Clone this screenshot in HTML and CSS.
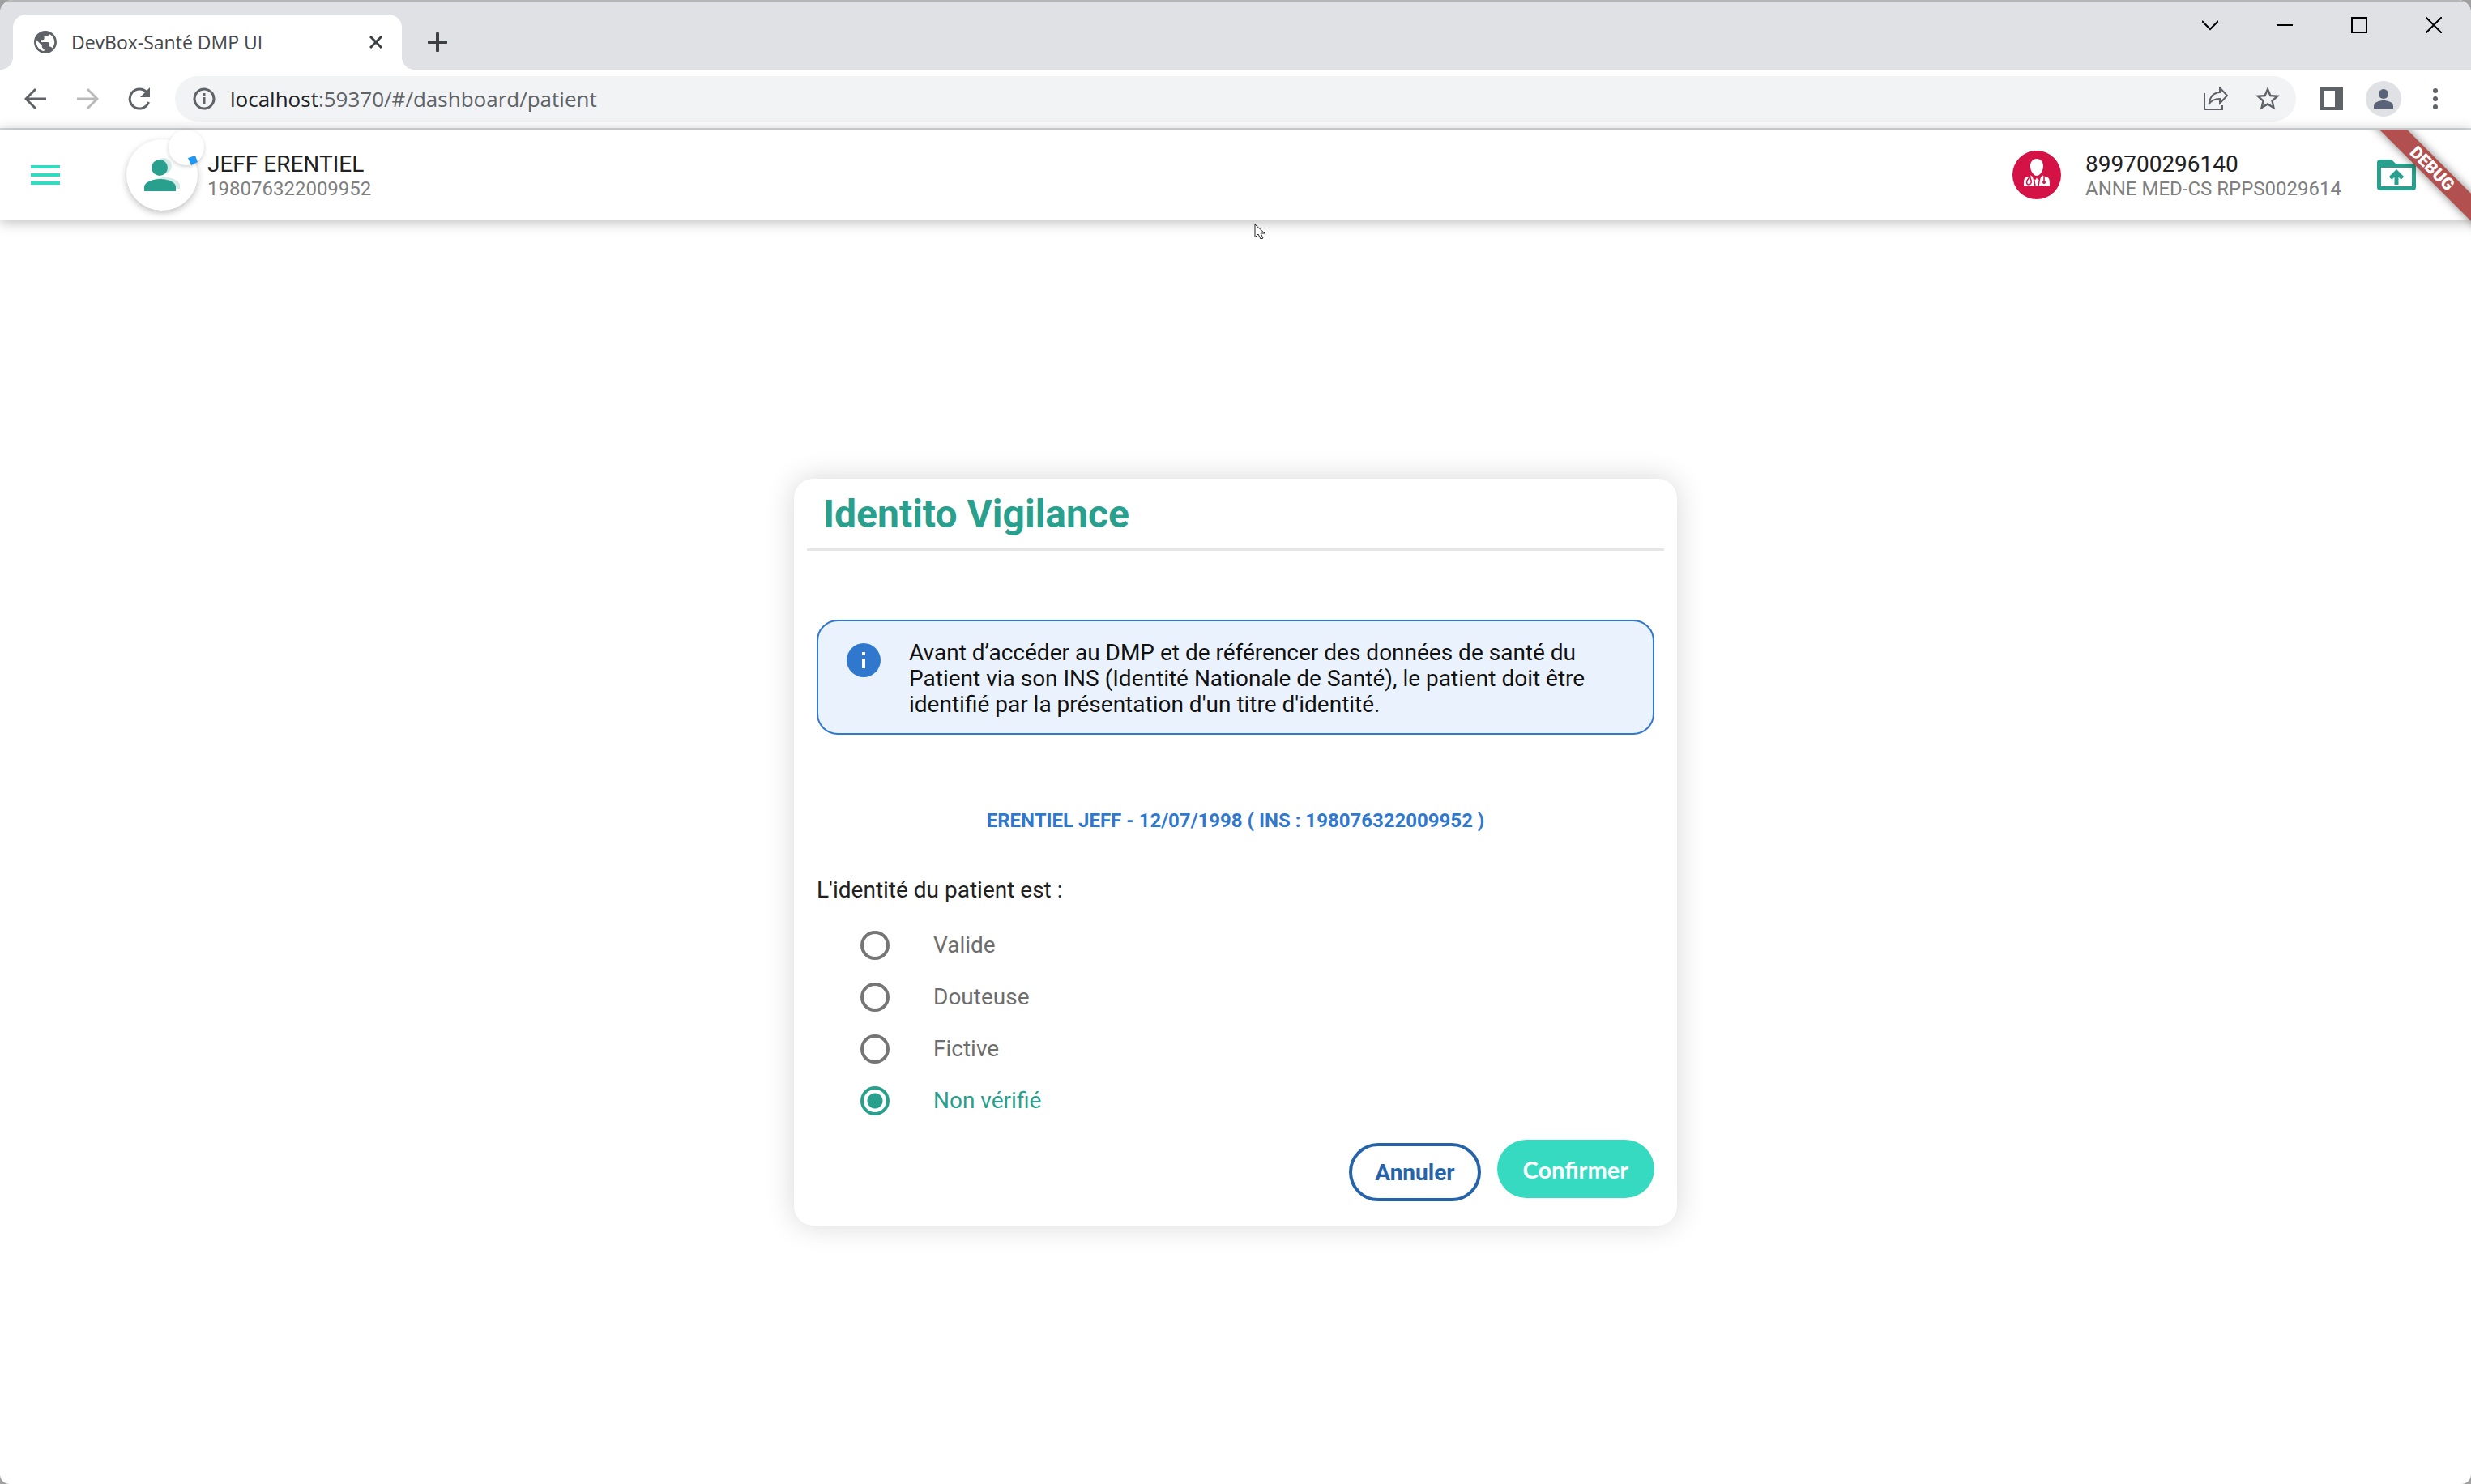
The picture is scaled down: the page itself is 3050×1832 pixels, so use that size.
FILE: index.html
```html
<!DOCTYPE html>
<html lang="fr">
<head>
<meta charset="utf-8">
<meta name="viewport" content="width=device-width, initial-scale=1">
<title>DevBox-Santé DMP UI</title>
<link rel="stylesheet" href="styles.css">
</head>
<body>
<div class="window">
  <div class="tab-strip">
    <div class="tab">
      <svg class="tab-icon" viewBox="2 2 20 20" aria-hidden="true"><path d="M12 2C6.480 2 2 6.480 2 12s4.480 10 10 10 10-4.480 10-10S17.520 2 12 2zm-1 17.930C7.050 19.440 4 16.080 4 12c0-.620.080-1.210.210-1.790L9 15v1c0 1.100.900 2 2 2v1.930zm6.900-2.540c-.260-.810-1-1.390-1.900-1.390h-1v-3c0-.550-.450-1-1-1H8v-2h2c.550 0 1-.450 1-1V7h2c1.100 0 2-.900 2-2v-.410c2.930 1.190 5 4.060 5 7.410 0 2.080-.800 3.970-2.100 5.390z"/></svg>
      <span class="tab-title">DevBox-Santé DMP UI</span>
      <button class="plain tab-close" type="button" aria-label="Fermer l'onglet"><svg width="16" height="16" viewBox="0 0 16 16"><path d="M1 1l14 14M15 1L1 15" fill="none" stroke="#3c4043" stroke-width="3"/></svg></button>
    </div>
    <button class="plain new-tab" type="button" aria-label="Nouvel onglet"><svg width="24" height="24" viewBox="0 0 24 24"><path d="M12 1.500v21M1.500 12h21" fill="none" stroke="#3c4043" stroke-width="4" stroke-linecap="round"/></svg></button>
    <div class="window-controls">
      <button class="plain" type="button" aria-label="Rechercher des onglets"><svg width="20" height="20" viewBox="0 0 20 20"><path d="M0 5l10 10L20 5" fill="none" stroke="#000" stroke-width="2"/></svg></button>
      <button class="plain" type="button" aria-label="Réduire"><svg width="20" height="20" viewBox="0 0 20 20"><path d="M0 10h20" stroke="#000" stroke-width="2"/></svg></button>
      <button class="plain" type="button" aria-label="Agrandir"><svg width="20" height="20" viewBox="0 0 20 20"><path d="M1 1h18v18H1z" fill="none" stroke="#000" stroke-width="2"/></svg></button>
      <button class="plain" type="button" aria-label="Fermer"><svg width="20" height="20" viewBox="0 0 20 20"><path d="M0 0l20 20M20 0L0 20" stroke="#000" stroke-width="2"/></svg></button>
    </div>
  </div>

  <div class="toolbar">
    <div class="nav-buttons">
      <button class="plain" type="button" aria-label="Précédent"><svg width="28" height="28" viewBox="0 0 28 28"><path d="M27 14H3M14 2L2 14l12 12" fill="none" stroke="#5f6368" stroke-width="3"/></svg></button>
      <button class="plain" type="button" aria-label="Suivant"><svg width="28" height="28" viewBox="0 0 28 28"><path d="M1 14h24M14 2l12 12-12 12" fill="none" stroke="#bababc" stroke-width="3"/></svg></button>
      <button class="plain" type="button" aria-label="Actualiser"><svg width="28" height="28" viewBox="0 0 28 28"><path d="M23.500 6.500A12 12 0 1 0 25.500 18" fill="none" stroke="#5f6368" stroke-width="3"/><path d="M27 0v12H15z" fill="#5f6368"/></svg></button>
    </div>
    <div class="omnibox">
      <svg width="28" height="28" viewBox="0 0 28 28" aria-hidden="true"><circle cx="14" cy="14" r="12" fill="none" stroke="#5f6368" stroke-width="3"/><path d="M14 12v8M14 7v3" stroke="#5f6368" stroke-width="3"/></svg>
      <div class="url"><span class="url-host">localhost</span>:59370/#/dashboard/patient</div>
      <button class="plain" type="button" aria-label="Partager"><svg width="30" height="30" viewBox="0 0 30 30"><path d="M1 8v20h22v-5" fill="none" stroke="#5f6368" stroke-width="2"/><path d="M20 1.500l9 9.500-9 9.500v-5.500c-7 0-11 2-13.500 7C7.500 13 12 7.500 20 7z" fill="none" stroke="#5f6368" stroke-width="2"/></svg></button>
      <button class="plain" type="button" aria-label="Ajouter aux favoris"><svg width="30" height="30" viewBox="2 2 20 20"><path fill="#5f6368" d="M22 9.240l-7.190-.620L12 2 9.190 8.630 2 9.240l5.460 4.730L5.820 21 12 17.270 18.180 21l-1.630-7.030L22 9.240zM12 15.400l-3.760 2.270 1-4.280-3.320-2.880 4.380-.380L12 6.100l1.710 4.040 4.380.380-3.320 2.880 1 4.280L12 15.400z"/></svg></button>
    </div>
    <div class="toolbar-end">
      <button class="plain" type="button" aria-label="Panneau latéral"><svg width="28" height="28" viewBox="0 0 28 28"><path fill="#5f6368" fill-rule="evenodd" d="M0 0h28v28H0zM4 4v20h14V4z"/></svg></button>
      <button class="plain profile" type="button" aria-label="Profil"><svg width="24" height="24" viewBox="0 0 24 24"><g fill="#5a6478"><circle cx="12" cy="6" r="6"/><path d="M0 24v-3c0-5 7-7 12-7s12 2 12 7v3z"/></g></svg></button>
      <button class="plain" type="button" aria-label="Menu du navigateur"><svg width="8" height="28" viewBox="0 0 8 28"><g fill="#5f6368"><circle cx="4" cy="4" r="3"/><circle cx="4" cy="14" r="3"/><circle cx="4" cy="24" r="3"/></g></svg></button>
    </div>
  </div>

  <div class="app">
    <header class="app-bar">
      <button class="plain menu" type="button" aria-label="Menu"><svg width="36" height="24" viewBox="0 0 36 24"><path fill="#35dac1" d="M0 0h36v4H0zM0 10h36v4H0zM0 20h36v4H0z"/></svg></button>
      <div class="avatar">
        <svg width="48" height="42" viewBox="-2 0 48 42" aria-hidden="true"><g fill="#d6ebe7"><circle cx="24" cy="10" r="10"/><path d="M5 38v-4c0-7 13-10 20-10s19 3 19 10v4z"/></g><g fill="#29a08d"><circle cx="19" cy="12" r="10"/><path d="M0 41v-5c0-7 13-10 20-10s19 3 19 10v5z"/></g></svg>
        <span class="avatar-badge"><svg width="12" height="12" viewBox="0 0 12 12" aria-hidden="true"><path d="M0 3l9-3 3 8-8 4z" fill="#2196f3"/></svg></span>
      </div>
      <div class="identity patient">
        <div class="identity-name">JEFF ERENTIEL</div>
        <div class="identity-detail">198076322009952</div>
      </div>
      <svg class="doctor" width="60" height="60" viewBox="0 0 60 60" aria-hidden="true"><circle cx="30" cy="30" r="30" fill="#d41245"/><path fill="#fff" d="M30 10c5 0 8 4 8 9 0 6-4 12-8 12s-8-6-8-12c0-5 3-9 8-9zM14 43.500c0-7 0-10 4-11l5-2 5 6 2-3 2 3 5-6 5 2c4 1 4 4 4 11z"/><path fill="none" stroke="#d41245" stroke-width="1.500" d="M21 31c0 3-2 4-3 6-1 3 0 5 2 5s4-2 3-5c0-2-2-3-1-6M39 31v6M26 33l2 10M34 33l-2 10"/><circle cx="39" cy="39" r="2" fill="#d41245"/></svg>
      <div class="identity practitioner">
        <div class="identity-name">899700296140</div>
        <div class="identity-detail">ANNE MED-CS RPPS0029614</div>
      </div>
      <button class="plain upload" type="button" aria-label="Envoyer un document"><svg width="48" height="38" viewBox="0 0 48 38"><path fill="#29a08d" fill-rule="evenodd" d="M4 0h14l5 5h21a4 4 0 0 1 4 4v25a4 4 0 0 1-4 4H4a4 4 0 0 1-4-4V4a4 4 0 0 1 4-4zM5 10v23h38V10z"/><path d="M24 31V15M16.500 23l7.500-7.500 7.500 7.500" fill="none" stroke="#29a08d" stroke-width="5"/></svg></button>
    </header>
    <div class="debug-corner"><div class="debug-ribbon">DEBUG</div></div>

    <main class="content">
      <form class="card">
        <h1 class="card-title">Identito Vigilance</h1>
        <div class="card-body">
          <div class="notice">
            <svg width="42" height="42" viewBox="0 0 42 42" aria-hidden="true"><circle cx="21" cy="21" r="21" fill="#3078cd"/><path d="M21 19v12M21 11v4" stroke="#fff" stroke-width="4"/></svg>
            <p class="notice-text">Avant d’accéder au DMP et de référencer des données de santé du Patient via son INS (Identité Nationale de Santé), le patient doit être identifié par la présentation d'un titre d'identité.</p>
          </div>
          <p class="patient-line">ERENTIEL JEFF - 12/07/1998 ( INS : 198076322009952 )</p>
          <fieldset class="choices">
            <legend>L'identité du patient est :</legend>
            <label class="choice"><input type="radio" name="identite">Valide</label>
            <label class="choice"><input type="radio" name="identite">Douteuse</label>
            <label class="choice"><input type="radio" name="identite">Fictive</label>
            <label class="choice"><input type="radio" name="identite" checked>Non vérifié</label>
          </fieldset>
          <div class="actions">
            <button class="btn btn-outline" type="button">Annuler</button>
            <button class="btn btn-primary" type="submit">Confirmer</button>
          </div>
        </div>
      </form>
    </main>
  </div>
  <svg class="cursor" width="14" height="20" viewBox="0 0 14 20" aria-hidden="true"><path d="M1 1v16l4-4 3 6 3-1-3-6h5z" fill="#fff" stroke="#222" stroke-width="1"/></svg>
</div>
</body>
</html>
```
FILE: styles.css
```css
* { box-sizing: border-box; }

body {
  margin: 0;
  background: #a0a0a0;
  font-family: Roboto, "Liberation Sans", sans-serif;
  color: #212121;
}

svg { display: block; flex: none; }

.plain {
  display: flex;
  align-items: center;
  justify-content: center;
  padding: 0;
  border: 0;
  background: none;
}

.window {
  position: relative;
  display: flex;
  flex-direction: column;
  min-height: 100vh;
  overflow: hidden;
  border-radius: 16px 16px 12px 12px;
  background: #fff;
}

/* Tab strip */
.tab-strip {
  display: flex;
  height: 86px;
  padding: 16px 36px 0 16px;
  border-top: 2px solid #b7b8b6;
  background: #dfe1e5;
}

.tab {
  position: relative;
  display: flex;
  align-items: center;
  gap: 18px;
  width: 480px;
  padding: 0 24px 0 26px;
  border-radius: 16px 16px 0 0;
  background: #fff;
}

.tab::before,
.tab::after {
  content: "";
  position: absolute;
  bottom: 0;
  width: 16px;
  height: 16px;
}

.tab::before {
  right: 100%;
  background: radial-gradient(circle at 0 0, transparent 16px, #fff 16px);
}

.tab::after {
  left: 100%;
  background: radial-gradient(circle at 100% 0, transparent 16px, #fff 16px);
}

.tab-icon { width: 28px; height: 28px; fill: #5f6368; }

.tab-title {
  flex: 1;
  font: 23px/32px "Open Sans", "Noto Sans", sans-serif;
  color: #45474a;
}

.new-tab { width: 24px; margin-left: 32px; }

.window-controls {
  display: flex;
  align-items: center;
  gap: 72px;
  height: 26px;
  margin-left: auto;
}

/* Toolbar */
.toolbar {
  display: flex;
  align-items: center;
  gap: 30px;
  height: 74px;
  padding: 0 40px 0 30px;
  border-bottom: 2px solid #dadce0;
}

.nav-buttons { display: flex; gap: 36px; }

.omnibox {
  display: flex;
  flex: 1;
  align-items: center;
  gap: 34px;
  height: 56px;
  padding: 0 20px 0 22px;
  border-radius: 28px;
  background: #f1f3f4;
}

.url {
  flex: 1;
  margin-left: -16px;
  font: 26px/32px "Open Sans", "Noto Sans", sans-serif;
  color: #5f6368;
}

.url-host { color: #202124; }

.toolbar-end { display: flex; align-items: center; gap: 28px; }
.toolbar-end .profile + .plain { margin-left: 10px; }

.profile {
  width: 44px;
  height: 44px;
  border-radius: 50%;
  background: #dfe1e5;
}

/* Application */
.app {
  position: relative;
  display: flex;
  flex: 1;
  flex-direction: column;
}

.app-bar {
  display: flex;
  align-items: center;
  height: 112px;
  padding: 0 68px 0 38px;
  background: #fff;
  box-shadow: 0 2px 16px rgba(0, 0, 0, .28);
}

.avatar {
  position: relative;
  display: flex;
  align-items: center;
  justify-content: center;
  width: 88px;
  height: 88px;
  margin-left: 82px;
  border-radius: 50%;
  background: #fff;
  box-shadow: 0 3px 8px rgba(0, 0, 0, .25);
}

.avatar-badge {
  position: absolute;
  top: -12px;
  right: -8px;
  display: flex;
  align-items: flex-end;
  justify-content: flex-end;
  width: 44px;
  height: 44px;
  padding-right: 8px;
  border-radius: 50%;
  background: #fff;
  box-shadow: 0 2px 5px rgba(0, 0, 0, .18);
}

.identity { padding-top: 2px; }
.patient { margin-left: 12px; }
.identity-name { font-size: 28px; line-height: 32px; }
.identity-detail { font-size: 24px; line-height: 28px; color: #808080; }

.doctor { margin-left: auto; }
.practitioner { margin-left: 30px; }
.upload { margin-left: 44px; }

.debug-corner {
  position: absolute;
  top: 0;
  right: 0;
  width: 160px;
  height: 160px;
  overflow: hidden;
}

.debug-ribbon {
  position: absolute;
  top: 36px;
  right: -72px;
  width: 240px;
  background: #b25050;
  box-shadow: 0 0 12px rgba(0, 0, 0, .5);
  font-size: 21px;
  font-weight: 900;
  line-height: 24px;
  text-align: center;
  color: #fff;
  transform: rotate(45deg);
}

.content {
  display: flex;
  flex: 1;
  align-items: center;
  justify-content: center;
  padding: 40px;
}

/* Identity card */
.card {
  width: 100%;
  max-width: 1090px;
  padding: 18px 16px 30px;
  border-radius: 24px;
  background: #fff;
  box-shadow: 0 0 36px rgba(0, 0, 0, .16);
}

.card-title {
  margin: 0;
  padding: 0 20px 16px;
  border-bottom: 3px solid #e6e6e6;
  font-size: 48px;
  line-height: 52px;
  color: #29a08d;
}

.card-body { padding: 85px 12px 0; }

.notice {
  display: flex;
  align-items: flex-start;
  gap: 35px;
  padding: 23px 60px 19px 35px;
  border: 2px solid #3078cd;
  border-radius: 26px;
  background: #eaf2fe;
}

.notice svg { margin-top: 4px; }

.notice-text {
  margin: 0;
  font-size: 28px;
  line-height: 32px;
  color: #111;
}

.patient-line {
  margin: 92px 0 0;
  font-size: 24px;
  font-weight: 700;
  line-height: 28px;
  text-align: center;
  color: #3078cd;
}

.choices {
  margin: 56px 0 0;
  padding: 0;
  border: 0;
  font-size: 28px;
  line-height: 32px;
}

.choices legend { margin-bottom: 20px; padding: 0; }

.choice {
  display: flex;
  align-items: center;
  gap: 54px;
  height: 64px;
  padding-left: 54px;
  color: #6d6d6d;
}

.choice:has(input:checked) { color: #29a08d; }

.choice input {
  appearance: none;
  width: 36px;
  height: 36px;
  margin: 0;
  border: 4px solid #757575;
  border-radius: 50%;
}

.choice input:checked {
  border-color: #29a08d;
  background: radial-gradient(circle, #29a08d 9px, transparent 10px);
}

.actions {
  display: flex;
  justify-content: flex-end;
  align-items: flex-start;
  gap: 20px;
  margin-top: 16px;
}

.btn {
  height: 72px;
  padding: 0 32px;
  border: 0;
  border-radius: 36px;
  font-size: 28px;
  font-weight: 700;
}

.btn-outline {
  margin-top: 4px;
  padding: 0 28px;
  border: 4px solid #2563aa;
  background: #fff;
  font-family: Roboto, sans-serif;
  color: #2563aa;
}

.btn-primary {
  background: #35dac1;
  font-family: Lato, sans-serif;
  font-size: 29px;
  color: #fff;
}

/* Mouse pointer floating over the page */
.cursor { position: absolute; top: 276px; left: 1548px; }
```
